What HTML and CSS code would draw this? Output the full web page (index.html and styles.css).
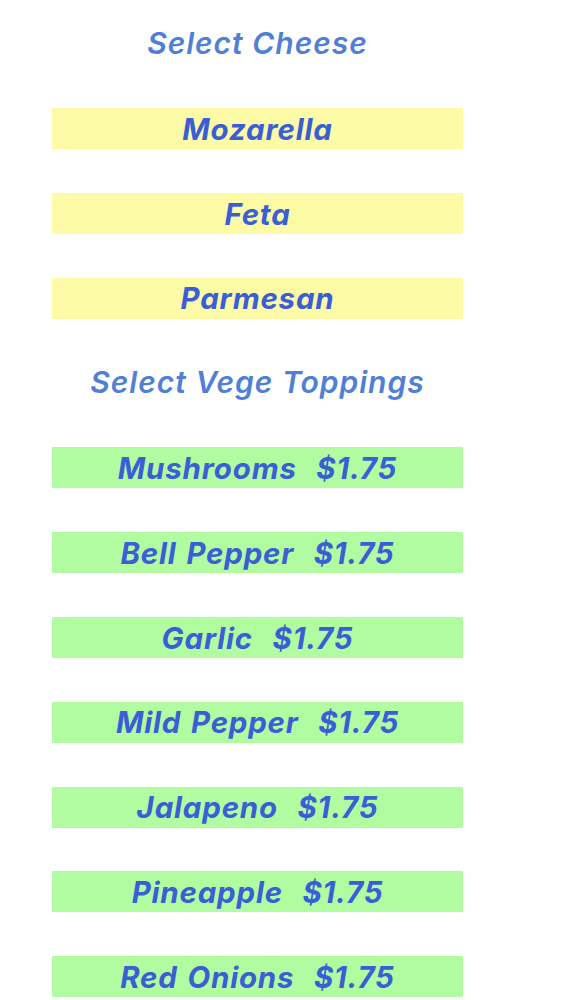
FILE: index.html
```html
<!DOCTYPE html>
<html>
<head>
<meta charset="utf-8">
<link rel="stylesheet" href="styles.css">
</head>
<body>
<div class="menu">
  <div class="heading">Select Cheese</div>
  <div class="item cheese">Mozarella</div>
  <div class="item cheese">Feta</div>
  <div class="item cheese">Parmesan</div>
  <div class="heading">Select Vege Toppings</div>
  <div class="item vege">Mushrooms&nbsp; $1.75</div>
  <div class="item vege">Bell Pepper&nbsp; $1.75</div>
  <div class="item vege">Garlic&nbsp; $1.75</div>
  <div class="item vege">Mild Pepper&nbsp; $1.75</div>
  <div class="item vege">Jalapeno&nbsp; $1.75</div>
  <div class="item vege">Pineapple&nbsp; $1.75</div>
  <div class="item vege">Red Onions&nbsp; $1.75</div>
</div>
</body>
</html>
```
FILE: styles.css
```css
html, body {
  margin: 0;
  padding: 0;
  background: #ffffff;
}
body {
  font-family: Inter, "Liberation Sans", sans-serif;
  overflow: hidden;
  height: 1000px;
}
.menu {
  width: 411px;
  margin-left: 52px;
  padding-top: 23.5px;
  display: flex;
  flex-direction: column;
  gap: 43.8px;
}
.heading, .item {
  height: 41px;
  display: flex;
  align-items: center;
  justify-content: center;
  font-style: italic;
  white-space: pre;
}
.heading {
  color: #4f80d6;
  font-weight: 600;
  font-size: 30px;
  letter-spacing: 1px;
  padding-bottom: 2px;
  box-sizing: border-box;
}
.item {
  color: #3a5ed6;
  font-weight: 700;
  font-size: 29.5px;
  letter-spacing: 0.8px;
  word-spacing: 2px;
}
.cheese { background: #fdfba6; }
.vege { background: #b1fba1; }
```
